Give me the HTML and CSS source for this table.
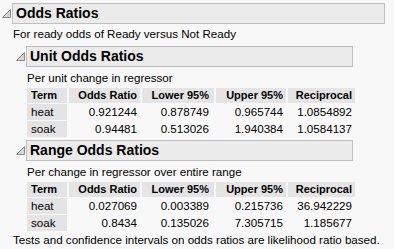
FILE: index.html
```html
<!DOCTYPE html>
<html>
<head>
<meta charset="utf-8">
<link rel="stylesheet" href="styles.css">
</head>
<body>
<div class="report">
  <div class="outline">
    <div class="ohead">
      <svg class="tri" width="9" height="9" viewBox="0 0 9 9"><polygon points="8.5,0.5 8.5,8.5 0.5,8.5" fill="#d4d4d4" stroke="#8c8c8c" stroke-width="1"/></svg>
      <div class="otitle outer-title">Odds Ratios</div>
    </div>
    <div class="obody">
      <div class="note">For ready odds of Ready versus Not Ready</div>

      <div class="outline sub">
        <div class="ohead">
          <svg class="tri" width="9" height="9" viewBox="0 0 9 9"><polygon points="8.5,0.5 8.5,8.5 0.5,8.5" fill="#d4d4d4" stroke="#8c8c8c" stroke-width="1"/></svg>
          <div class="otitle sub-title">Unit Odds Ratios</div>
        </div>
        <div class="obody sub-body">
          <div class="note">Per unit change in regressor</div>
          <table class="grid">
            <thead>
              <tr><th class="c-term">Term</th><th class="c-or">Odds Ratio</th><th class="c-lo">Lower 95%</th><th class="c-up">Upper 95%</th><th class="c-rc">Reciprocal</th></tr>
            </thead>
            <tbody>
              <tr><td class="term">heat</td><td>0.921244</td><td class="lo">0.878749</td><td>0.965744</td><td>1.0854892</td></tr>
              <tr><td class="term">soak</td><td>0.94481</td><td class="lo">0.513026</td><td>1.940384</td><td>1.0584137</td></tr>
            </tbody>
          </table>
        </div>
      </div>

      <div class="outline sub">
        <div class="ohead">
          <svg class="tri" width="9" height="9" viewBox="0 0 9 9"><polygon points="8.5,0.5 8.5,8.5 0.5,8.5" fill="#d4d4d4" stroke="#8c8c8c" stroke-width="1"/></svg>
          <div class="otitle sub-title">Range Odds Ratios</div>
        </div>
        <div class="obody sub-body">
          <div class="note">Per change in regressor over entire range</div>
          <table class="grid">
            <thead>
              <tr><th class="c-term">Term</th><th class="c-or">Odds Ratio</th><th class="c-lo">Lower 95%</th><th class="c-up">Upper 95%</th><th class="c-rc">Reciprocal</th></tr>
            </thead>
            <tbody>
              <tr><td class="term">heat</td><td>0.027069</td><td class="lo">0.003389</td><td>0.215736</td><td>36.942229</td></tr>
              <tr><td class="term">soak</td><td>0.8434</td><td class="lo">0.135026</td><td>7.305715</td><td>1.185677</td></tr>
            </tbody>
          </table>
        </div>
      </div>

      <div class="note foot">Tests and confidence intervals on odds ratios are likelihood ratio based.</div>
    </div>
  </div>
</div>
</body>
</html>
```

FILE: styles.css
```css
html, body {
  margin: 0;
  padding: 0;
  background: #f8f8f8;
}
body {
  font-family: "Liberation Sans", Arial, sans-serif;
  font-size: 11.6px;
  color: #000;
}
.report {
  padding-top: 3px;
  width: 394px;
}
.ohead {
  display: flex;
  align-items: center;
}
.tri {
  display: block;
  flex: none;
  margin-left: 2px;
  margin-right: 1px;
}
.otitle {
  box-sizing: border-box;
  height: 21px;
  line-height: 19px;
  background: #ebebeb;
  border: 1px solid #bfbfbf;
  font-weight: bold;
  font-size: 14px;
  padding-left: 3px;
}
.outer-title {
  width: 373px;
}
.sub-title {
  width: 327px;
}
.obody {
  display: flex;
  flex-direction: column;
  align-items: flex-start;
}
.note {
  line-height: 15px;
  padding-left: 13px;
  margin-top: 2px;
}
.sub {
  margin-top: 5px;
  margin-left: 14px;
}
.sub + .sub {
  margin-top: 2px;
}
.sub .note {
  padding-left: 13px;
  margin-top: 3px;
}
.grid {
  border-collapse: separate;
  border-spacing: 2px 1px;
  margin: 2px 0 0 11px;
}
.grid th, .grid td {
  padding: 0 3px 0 4px;
  line-height: 15px;
  height: 15px;
  white-space: nowrap;
  text-align: right;
}
.grid th {
  background: #e4e4e4;
  font-weight: bold;
  font-size: 11px;
}
.grid td {
  height: 16px;
  line-height: 16px;
}
.grid th.c-term, .grid td.term {
  text-align: left;
  background: #e4e4e4;
}
.grid th.c-lo, .grid td.lo {
  padding-right: 5px;
}
.c-term { width: 33px; }
.c-or { width: 64px; }
.c-lo { width: 63px; }
.c-up { width: 63px; }
.c-rc { width: 60px; }
.foot {
  margin-top: 0;
}
```
